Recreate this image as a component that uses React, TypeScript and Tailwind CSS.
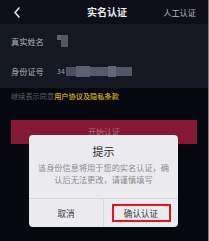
export default function App() {
  return (
    <div className="relative h-[241px] w-[209px] overflow-hidden border-r border-[#7c7c82] bg-[#07080f] font-['Noto_Sans_CJK_SC','Noto_Sans',sans-serif]">
      {/* 顶部导航 */}
      <div className="grid h-[24px] grid-cols-[1fr_auto_1fr] items-center bg-[#0d0e18] px-[11px]">
        <svg width="8" height="11" viewBox="0 0 8 11" className="ml-[2px]">
          <path d="M6 1 L2 5.5 L6 10" fill="none" stroke="#e8e8ec" strokeWidth="1.6" strokeLinecap="round" strokeLinejoin="round" />
        </svg>
        <div className="ml-[6px] text-[10px] font-bold leading-none text-[#ececf0]">实名认证</div>
        <div className="justify-self-end pr-[1px] text-[8.2px] leading-none text-[#b8b8bd]">人工认证</div>
      </div>

      {/* 表单 */}
      <div className="bg-[#151822] py-[2px]">
        <div className="flex h-[30px] items-center px-[11px]">
          <span className="w-[46px] text-[8.2px] leading-none text-[#b4b4ba]">真实姓名</span>
          <div className="flex h-[12px] items-start blur-[0.5px]">
            <div className="h-[5px] w-[4px] bg-[#5e6170]" />
            <div className="h-[12px] w-[7px] bg-[#535666]" />
          </div>
        </div>
        <div className="flex h-[30px] items-center px-[11px]">
          <span className="w-[46px] text-[8.2px] leading-none text-[#b4b4ba]">身份证号</span>
          <span className="mr-[1px] text-[7px] leading-none text-[#9a9ca8]">34</span>
          <div className="flex h-[11px] items-center blur-[0.5px]">
            <div className="h-[9px] w-[10px] bg-[#4c4f5e]" />
            <div className="h-[11px] w-[14px] bg-[#5c5f6e]" />
            <div className="h-[9px] w-[18px] bg-[#565968]" />
            <div className="h-[11px] w-[8px] bg-[#646776]" />
            <div className="h-[9px] w-[16px] bg-[#535666]" />
          </div>
        </div>
      </div>

      {/* 协议 */}
      <div className="mt-[3px] px-[11px] text-[7.2px] leading-[10px] text-[#5c5e68]">
        继续表示同意<span className="font-medium text-[#d2b41c]">用户协议及隐私条款</span>
      </div>

      {/* 开始认证 */}
      <div className="mx-[11px] mt-[19px] flex h-[24px] items-center justify-center bg-[#841836] text-[8px] text-[#b8707f]">
        开始认证
      </div>

      {/* 提示弹窗 */}
      <div className="absolute left-[29px] top-[135px] flex h-[92px] w-[149px] flex-col rounded-[4px] bg-[#ebebef]">
        <div className="pt-[9px] text-center text-[11px] leading-[14px] text-[#2a2a2e]">提示</div>
        <div className="mt-[3px] text-center text-[8.2px] leading-[12px] text-[#8c8c92]">
          该身份信息将用于您的实名认证，确
          <br />
          认后无法更改，请谨慎填写
        </div>
        <div className="mt-auto flex h-[29px] border-t border-[#d6d6dc]">
          <div className="flex flex-1 items-center justify-center border-r border-[#d6d6dc] text-[8.6px] text-[#3a3a3e]">
            取消
          </div>
          <div className="flex flex-1 items-center justify-center">
            <span className="flex h-[18px] w-[59px] items-center justify-center border-2 border-[#e3121c] text-[8.6px] text-[#3a3a3e]">
              确认认证
            </span>
          </div>
        </div>
      </div>
    </div>
  )
}
